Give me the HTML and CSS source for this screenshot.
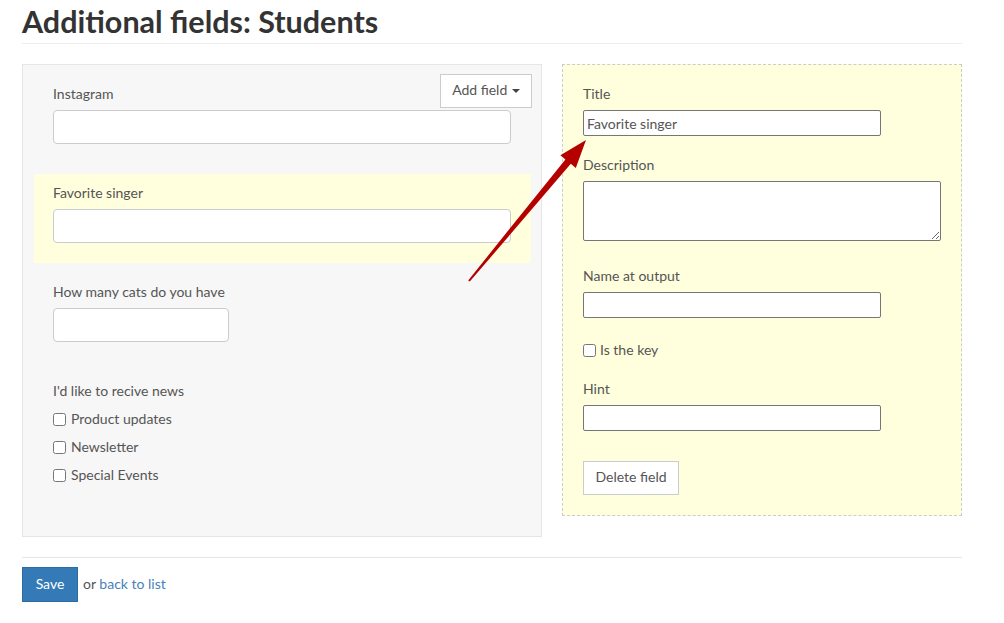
FILE: index.html
```html
<!DOCTYPE html>
<html>
<head>
<title>Additional fields: Students</title>
<link rel="stylesheet" href="styles.css">
</head>
<body>

<div class="page">
  <h1 class="page-title">Additional fields: Students</h1>

  <div class="columns">
    <div class="form-preview">
      <button class="add-field">Add field <span class="caret"></span></button>

      <div class="field-row">
        <label class="field-label">Instagram</label>
        <input type="text" class="form-control">
      </div>

      <div class="field-row selected">
        <label class="field-label">Favorite singer</label>
        <input type="text" class="form-control">
      </div>

      <div class="field-row">
        <label class="field-label">How many cats do you have</label>
        <input type="text" class="form-control short">
      </div>

      <div class="field-row">
        <label class="field-label">I'd like to recive news</label>
        <div class="checks">
          <label class="check"><input type="checkbox"> Product updates</label>
          <label class="check"><input type="checkbox"> Newsletter</label>
          <label class="check"><input type="checkbox"> Special Events</label>
        </div>
      </div>
    </div>

    <div class="field-editor">
      <div class="group">
        <label class="edit-label">Title</label>
        <input type="text" class="edit-input" value="Favorite singer">
      </div>
      <div class="group tall">
        <label class="edit-label">Description</label>
        <textarea class="edit-area"></textarea>
      </div>
      <div class="group key-gap">
        <label class="edit-label">Name at output</label>
        <input type="text" class="edit-input">
      </div>
      <div class="group">
        <label class="check-key"><input type="checkbox"> Is the key</label>
      </div>
      <div class="group last">
        <label class="edit-label">Hint</label>
        <input type="text" class="edit-input">
      </div>
      <button class="btn-default">Delete field</button>
    </div>
  </div>

  <div class="actions">
    <button class="btn-save">Save</button>
    <span class="or">or <a href="#">back to list</a></span>
  </div>

  <!-- pointer from the selected field to its settings -->
  <svg class="pointer" width="1004" height="623" viewBox="0 0 1004 623">
    <polygon fill="#b50000" points="586,140 575.8,168 570.8,163.8 469.8,281.6 468.2,280.4 565.4,159.4 560.4,155.2"/>
  </svg>
</div>

</body>
</html>
```

FILE: styles.css
```css
body {
  margin: 0;
  font-family: Lato, "Open Sans", sans-serif;
  font-size: 14px;
  color: #555;
  background: #fff;
}
.page {
  width: 940px;
  padding: 0 22px;
}
.page-title {
  margin: 0;
  padding-top: 4px;
  height: 39px;
  font-size: 30.5px;
  font-weight: 700;
  color: #333;
  line-height: 34px;
  border-bottom: 1px solid #eee;
}
.columns {
  display: flex;
  align-items: flex-start;
  gap: 20px;
  margin-top: 20px;
}
.form-preview {
  position: relative;
  width: 498px;
  height: 451px;
  padding: 10px 10px 10px 11px;
  background: #f7f7f7;
  border: 1px solid #e6e6e6;
}
.add-field {
  position: absolute;
  top: 9px;
  right: 9px;
  width: 92px;
  height: 34px;
  background: #fff;
  border: 1px solid #ccc;
  font-family: inherit;
  font-size: 14px;
  color: #555;
  padding: 0 0 3px;
  cursor: pointer;
}
.caret {
  display: inline-block;
  width: 0;
  height: 0;
  margin-left: 1px;
  vertical-align: middle;
  border-top: 4px solid #444;
  border-left: 4px solid transparent;
  border-right: 4px solid transparent;
}
.field-row {
  padding: 9px 20px 20px 19px;
  margin-bottom: 10px;
}
.field-row.selected {
  background: #ffffdd;
}
.field-label {
  display: block;
  line-height: 20px;
  margin-bottom: 6px;
}
.form-control {
  display: block;
  box-sizing: border-box;
  width: 458px;
  height: 34px;
  border: 1px solid #ccc;
  border-radius: 4px;
  background: #fff;
  padding: 6px 12px;
  font-family: inherit;
  font-size: 14px;
}
.form-control.short {
  width: 176px;
}
.checks {
  margin-top: -2px;
}
.check {
  display: flex;
  align-items: center;
  height: 28px;
  line-height: 20px;
}
.check input {
  margin: 0 5px 0 0;
  width: 13px;
  height: 13px;
}
.field-editor {
  width: 358px;
  padding: 19px 20px 20px 20px;
  background: #ffffdd;
  border: 1px dashed #ccc;
}
.group {
  margin-bottom: 19px;
}
.group.tall {
  margin-bottom: 25px;
}
.group.key-gap {
  margin-bottom: 22px;
}
.group.last {
  margin-bottom: 30px;
}
.edit-label {
  display: block;
  line-height: 20px;
  margin-bottom: 6px;
}
.edit-input {
  display: block;
  box-sizing: border-box;
  width: 298px;
  height: 26px;
  border: 1px solid #767676;
  border-radius: 2px;
  padding: 1px 3px;
  background: #fff;
  font-family: inherit;
  font-size: 14px;
  color: #555;
}
.edit-area {
  display: block;
  box-sizing: border-box;
  width: 358px;
  height: 60px;
  border: 1px solid #767676;
  border-radius: 2px;
  background: #fff;
}
.check-key {
  display: flex;
  align-items: center;
  line-height: 20px;
}
.check-key input {
  margin: 0 4px 0 0;
  width: 13px;
  height: 13px;
}
.btn-default {
  display: block;
  width: 96px;
  height: 34px;
  background: #fff;
  border: 1px solid #ccc;
  font-family: inherit;
  font-size: 14px;
  color: #555;
  padding: 0 0 3px;
  cursor: pointer;
}
.actions {
  margin-top: 20px;
  padding-top: 9px;
  border-top: 1px solid #e6e6e6;
  display: flex;
  align-items: center;
}
.btn-save {
  width: 56px;
  height: 35px;
  background: #337ab7;
  border: 1px solid #2e6da4;
  color: #fff;
  font-family: inherit;
  font-size: 14px;
  padding: 0 0 2px;
  cursor: pointer;
}
.or {
  margin-left: 5px;
  margin-top: -3px;
}
.or a {
  color: #4a7fbb;
  text-decoration: none;
}
.pointer {
  position: absolute;
  left: 0;
  top: 0;
  pointer-events: none;
}
```
